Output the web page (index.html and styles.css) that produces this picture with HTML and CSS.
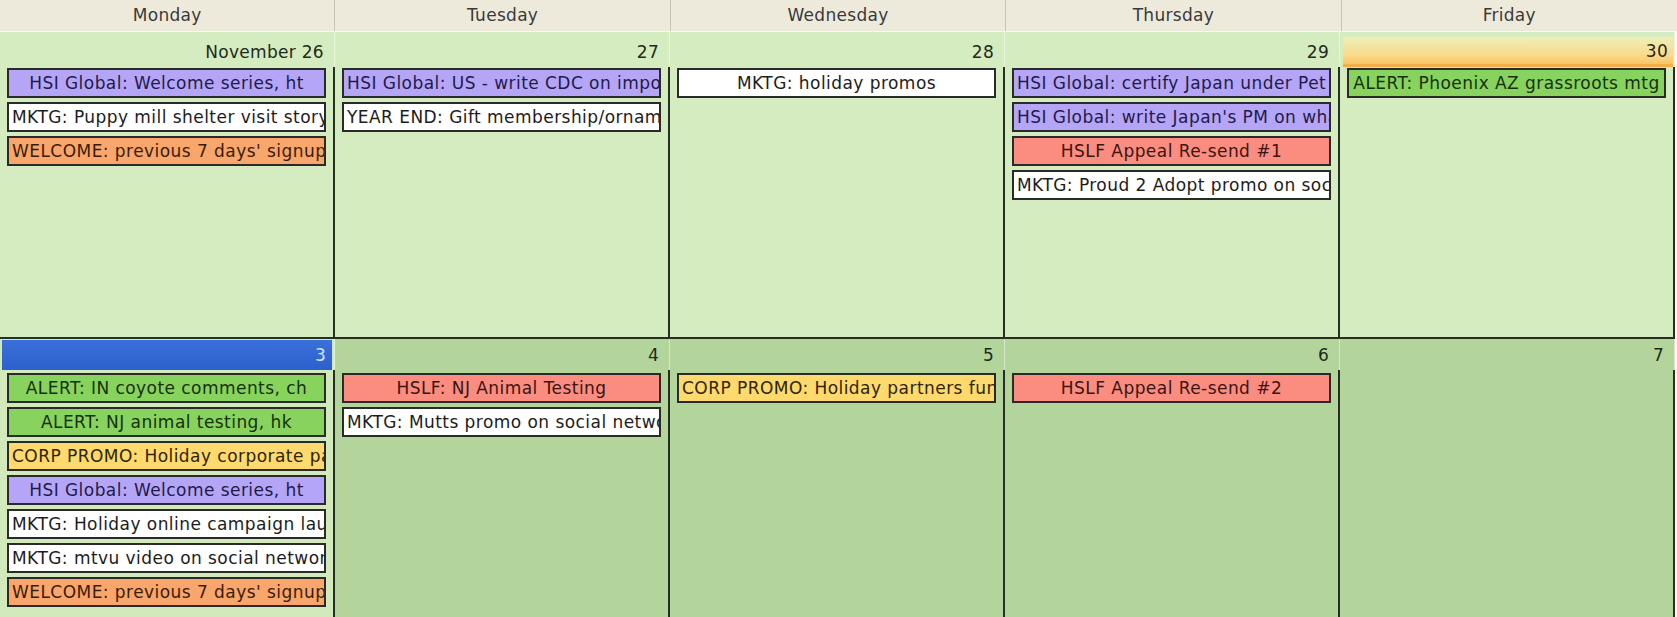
FILE: index.html
```html
<!DOCTYPE html>
<html>
<head>
<meta charset="utf-8">
<link rel="stylesheet" href="styles.css">
</head>
<body>
<div class="cal">
  <div class="head">
    <div class="hcell">Monday</div>
    <div class="hcell">Tuesday</div>
    <div class="hcell">Wednesday</div>
    <div class="hcell">Thursday</div>
    <div class="hcell">Friday</div>
  </div>

  <div class="week week1">
    <div class="day">
      <div class="date"><span class="dnum">November 26</span></div>
      <div class="events">
        <div class="ev purple">HSI Global: Welcome series, ht</div>
        <div class="ev white">MKTG: Puppy mill shelter visit story</div>
        <div class="ev orange">WELCOME: previous 7 days' signups</div>
      </div>
    </div>
    <div class="day">
      <div class="date"><span class="dnum">27</span></div>
      <div class="events">
        <div class="ev purple">HSI Global: US - write CDC on importation</div>
        <div class="ev white">YEAR END: Gift membership/ornament</div>
      </div>
    </div>
    <div class="day">
      <div class="date"><span class="dnum">28</span></div>
      <div class="events">
        <div class="ev white">MKTG: holiday promos</div>
      </div>
    </div>
    <div class="day">
      <div class="date"><span class="dnum">29</span></div>
      <div class="events">
        <div class="ev purple">HSI Global: certify Japan under Pet</div>
        <div class="ev purple">HSI Global: write Japan's PM on whaling</div>
        <div class="ev red">HSLF Appeal Re-send #1</div>
        <div class="ev white">MKTG: Proud 2 Adopt promo on social networks</div>
      </div>
    </div>
    <div class="day">
      <div class="date"><span class="dnum dnum-hl">30</span></div>
      <div class="events">
        <div class="ev green">ALERT: Phoenix AZ grassroots mtg</div>
      </div>
    </div>
  </div>

  <div class="week week2">
    <div class="day day-today">
      <div class="date"><span class="dnum dnum-today">3</span></div>
      <div class="events">
        <div class="ev green">ALERT: IN coyote comments, ch</div>
        <div class="ev green">ALERT: NJ animal testing, hk</div>
        <div class="ev yellow">CORP PROMO: Holiday corporate partners</div>
        <div class="ev purple">HSI Global: Welcome series, ht</div>
        <div class="ev white">MKTG: Holiday online campaign launch</div>
        <div class="ev white">MKTG: mtvu video on social networks</div>
        <div class="ev orange">WELCOME: previous 7 days' signups</div>
      </div>
    </div>
    <div class="day">
      <div class="date"><span class="dnum">4</span></div>
      <div class="events">
        <div class="ev red">HSLF: NJ Animal Testing</div>
        <div class="ev white">MKTG: Mutts promo on social networks</div>
      </div>
    </div>
    <div class="day">
      <div class="date"><span class="dnum">5</span></div>
      <div class="events">
        <div class="ev yellow">CORP PROMO: Holiday partners fund</div>
      </div>
    </div>
    <div class="day">
      <div class="date"><span class="dnum">6</span></div>
      <div class="events">
        <div class="ev red">HSLF Appeal Re-send #2</div>
      </div>
    </div>
    <div class="day">
      <div class="date"><span class="dnum">7</span></div>
      <div class="events"></div>
    </div>
  </div>
</div>
</body>
</html>
```

FILE: styles.css
```css
html, body {
  margin: 0;
  padding: 0;
  background: #ffffff;
}
body {
  font-family: "DejaVu Sans", Verdana, sans-serif;
  font-size: 17px;
  letter-spacing: 0.45px;
  color: #1e1e1e;
  width: 1677px;
  height: 617px;
  overflow: hidden;
}
.cal {
  width: 1675px;
  display: flex;
  flex-direction: column;
  height: 617px;
}
.head {
  display: grid;
  grid-template-columns: repeat(5, 1fr);
  height: 32px;
  background: #edeadc;
  border-bottom: 1px solid #f8f7f1;
  box-sizing: border-box;
  width: 1677px;
}
.hcell {
  display: flex;
  align-items: center;
  justify-content: center;
  color: #3a3a3a;
  font-size: 17px;
  letter-spacing: 0.3px;
  border-right: 1px solid #c9c5b5;
  padding-bottom: 2px;
}
.hcell:last-child {
  border-right: none;
}
.week {
  display: grid;
  grid-template-columns: repeat(5, 1fr);
}
.week1 {
  height: 305px;
  background: #d5ebc0;
}
.week2 {
  flex: 1;
  background: #b3d59b;
  border-top: 2px solid #263022;
}
.day {
  display: flex;
  flex-direction: column;
  min-width: 0;
}
.day-today {
  background: #d2e9bc;
}
.date {
  display: flex;
  border-right: 1px solid rgba(255, 255, 255, 0.45);
}
.week1 .date {
  height: 35px;
  padding-top: 5px;
  box-sizing: border-box;
}
.week2 .date {
  height: 31px;
  padding-top: 1px;
  box-sizing: border-box;
}
.dnum {
  flex: 1;
  display: flex;
  align-items: center;
  justify-content: flex-end;
  padding-right: 8px;
  color: #1f2a1a;
  letter-spacing: 0.3px;
  margin: 0 2px 1px 2px;
}
.dnum-hl {
  background: linear-gradient(#eef0b8, #fbd88a 70%, #f9c565);
  border-bottom: 3px solid #f4ad48;
  margin: 0 1px 0 3px;
  padding-right: 5px;
}
.dnum-today {
  background: linear-gradient(#3a70da, #2c60cc);
  color: #d4e2ff;
  margin: 0 2px 0 2px;
  padding-right: 6px;
}
.events {
  flex: 1;
  display: flex;
  flex-direction: column;
  gap: 4px;
  padding: 1px 7px 0 7px;
  border-right: 2px solid #263022;
  min-width: 0;
}
.week2 .events {
  padding-top: 3px;
}
.ev {
  height: 30px;
  box-sizing: border-box;
  border: 2px solid #2a2a2a;
  line-height: 26px;
  white-space: nowrap;
  overflow: hidden;
  text-align: center;
  padding: 0 3px;
  color: #1c1c1c;
}
.purple { background: #b5a5f6; color: #231a4a; }
.white  { background: #ffffff; }
.orange { background: #f8a66c; color: #3a1c08; }
.red    { background: #fa8c80; color: #3a1512; }
.yellow { background: #fdd96e; color: #2e2408; }
.green  { background: #88d35e; color: #15300c; }
```
